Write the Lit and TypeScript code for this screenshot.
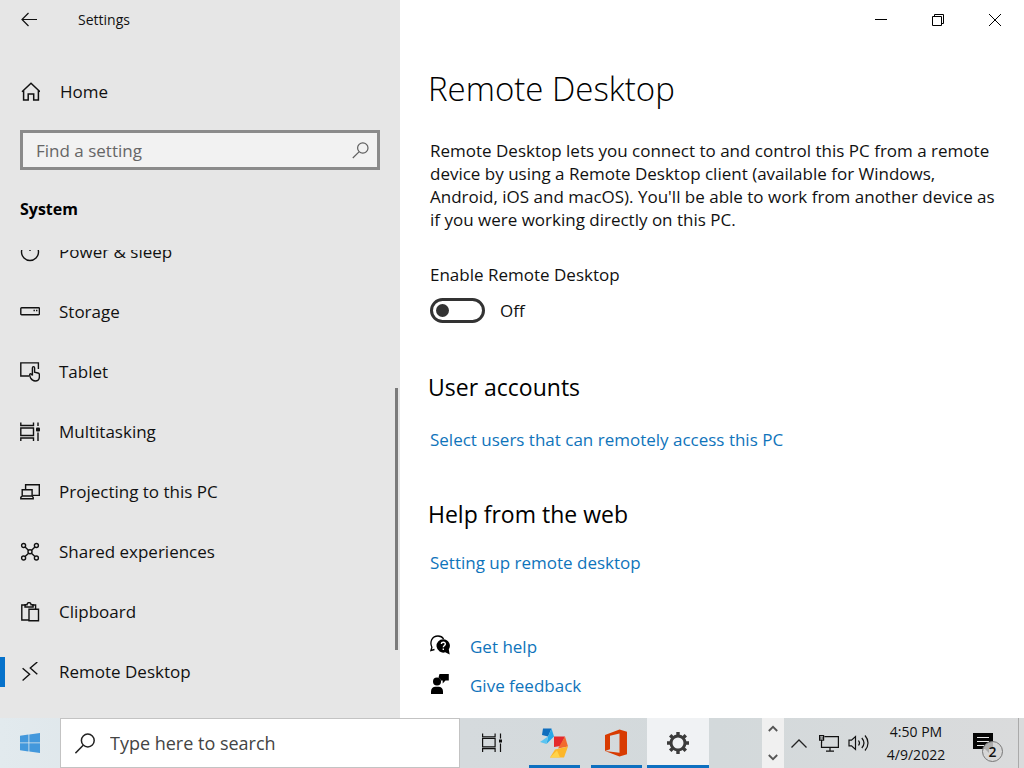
import { LitElement, html, css, svg, nothing } from "lit";
import { customElement, property, state } from "lit/decorators.js";
import { classMap } from "lit/directives/class-map.js";

const navIcons: Record<string, unknown> = {
  power: svg`<circle cx="10" cy="10" r="8.5"/><path d="M10 1v8"/>`,
  storage: svg`<rect x=".8" y="5.700" width="18.600" height="7" rx=".8"/><path d="M13.500 8.500h1.400M16 8.500h1.400" stroke-width="1.400"/>`,
  tablet: svg`<path d="M9 14H.8V.9h17.600v6.200"/><path d="M12.400 12.700V5.900c0-1.700 2.200-1.700 2.200 0v4.400l3.300.7c1 .2 1.500.8 1.500 1.800v2c0 2.500-1.600 4.200-4.200 4.200-2.300 0-3.400-.9-4.500-2.800-.8-1.500-1.200-3-.9-3.900.5-1 1.700-.7 2.600 1.100z"/>`,
  multi: svg`<path d="M.8 .5v3h12.700v-3M.8 19v-3h12.700v3M.8 6h12.700v7.500H.8zM18 .5v3.500M18 10.500v8.500"/><rect x="16" y="5.500" width="4" height="4" rx="1" fill="currentColor" stroke="none"/>`,
  project: svg`<path d="M5.600 7V2.800h13.700v10.600h-7"/><path d="M2.200 14V7.800h9.900V14M.8 16.800h12.400v-1.400L12.100 14H2.200L.8 15.400z"/>`,
  shared: svg`<circle cx="3.600" cy="3.500" r="2"/><circle cx="16.400" cy="3.500" r="2"/><circle cx="3.600" cy="16" r="2"/><circle cx="16.400" cy="16" r="2"/><circle cx="10" cy="9.800" r="2"/><path d="M5.100 5l3.500 3.400M14.900 5l-3.500 3.400M5.100 14.600l3.500-3.400M14.900 14.600l-3.500-3.400"/>`,
  clipboard: svg`<path d="M9 18H1.800V3H6M12 3h3.600v4"/><path d="M5 5V2.800h2c.2-3 3.900-3 4.100 0h2V5z"/><path d="M9 7.300h9.500v11.500H9z"/>`,
  remote: svg`<path d="M2.600 6.200l7 6.100-7 6.200M17.300 0l-7 6 7 6.300"/>`,
};

@customElement("nav-icon")
class NavIcon extends LitElement {
  @property() name = "";
  static styles = css`
    :host { display: block; width: 20px; height: 20px; }
    svg { display: block; fill: none; stroke: currentColor; stroke-width: 1.4; }
  `;
  render() {
    return html`<svg width="20" height="20" viewBox="0 0 20 20" aria-hidden="true">${navIcons[this.name] ?? nothing}</svg>`;
  }
}

@customElement("settings-sidebar")
class SettingsSidebar extends LitElement {
  @state() selected = "remote";
  private items = [
    ["power", "Power & sleep"],
    ["storage", "Storage"],
    ["tablet", "Tablet"],
    ["multi", "Multitasking"],
    ["project", "Projecting to this PC"],
    ["shared", "Shared experiences"],
    ["clipboard", "Clipboard"],
    ["remote", "Remote Desktop"],
  ];
  static styles = css`
    :host { display: flex; flex-direction: column; min-height: 0; background: #e6e6e6; color: #111; }
    button, input { font: inherit; color: inherit; border: 0; background: none; padding: 0; margin: 0; outline: 0; }
    svg { display: block; fill: none; stroke: currentColor; }
    .bar { display: flex; align-items: center; height: 40px; flex: none; font-size: 14px; }
    .back { display: flex; align-items: center; padding: 0 20px; height: 40px; margin-right: 20px; }
    .home { display: flex; align-items: center; gap: 20px; height: 60px; margin-top: 22px; padding: 0 20px; flex: none; }
    .search { display: flex; align-items: center; box-sizing: border-box; height: 40px; flex: none; margin: 8px 20px 0; border: 3px solid #8b8b8b; background: #f2f2f2; padding: 0 8px 0 13px; color: #5f5f5f; }
    .search input { flex: 1; min-width: 0; height: 34px; }
    .search input::placeholder { color: #666; opacity: 1; }
    h2 { margin: 24px 20px 0; font-size: 16px; font-weight: 700; line-height: 30px; height: 56px; flex: none; color: #000; }
    .scroller { position: relative; flex: 1; min-height: 0; overflow: hidden; }
    ul { list-style: none; padding: 0; margin: -28px 0 0; }
    .item { display: flex; align-items: center; gap: 19px; width: 100%; height: 60px; padding-right: 20px; text-align: left; }
    .item::before { content: ""; width: 5px; height: 30px; margin-right: -4px; }
    .item.on::before { background: #0672cb; }
    .thumb { position: absolute; right: 2px; top: 138px; width: 3px; height: 56%; background: #7b7b7b; }
  `;
  render() {
    return html`
      <div class="bar">
        <button class="back" aria-label="Back"><svg width="18" height="16" viewBox="0 0 18 16" stroke-width="1.200"><path d="M17 7.500H2.500M8.500 1L2 7.500 8.500 14"/></svg></button>
        <span>Settings</span>
      </div>
      <button class="home"><svg width="20" height="20" viewBox="0 0 20 20" stroke-width="1.500"><path d="M2 9.700l9-8.500 9 8.500M3.600 8.300V18h4.600v-6h5.500v6h4.700V8.300"/></svg><span>Home</span></button>
      <label class="search"><input type="search" placeholder="Find a setting" aria-label="Find a setting" />
        <svg width="17" height="17" viewBox="0 0 17 17" stroke-width="1.200"><circle cx="10.800" cy="6" r="5.200"/><path d="M7 9.800L.8 16"/></svg></label>
      <h2>System</h2>
      <div class="scroller">
        <ul>
          ${this.items.map(([id, label]) => html`<li><button class=${classMap({ item: true, on: id === this.selected })} @click=${() => (this.selected = id)}><nav-icon name=${id}></nav-icon><span>${label}</span></button></li>`)}
        </ul>
        <div class="thumb"></div>
      </div>`;
  }
}

@customElement("settings-content")
class SettingsContent extends LitElement {
  @state() enabled = false;
  static styles = css`
    :host { display: flex; flex-direction: column; min-height: 0; overflow: hidden; background: #fff; color: #111; }
    .controls { display: flex; justify-content: flex-end; flex: none; padding-right: 1px; }
    .controls button { width: 57px; height: 40px; border: 0; padding: 0; background: none; display: grid; place-items: center; color: #000; }
    svg { display: block; }
    .page { padding: 24px 24px 0 28px; }
    h1 { margin: 0; font-size: 33px; font-weight: 350; line-height: 50px; color: #000; }
    .body { padding-left: 2px; }
    p { margin: 25px 0 0; line-height: 23px; }
    .label { display: block; margin-top: 32px; line-height: 24px; }
    .row { display: flex; align-items: center; gap: 15px; margin-top: 11px; height: 25px; line-height: 25px; }
    .toggle { appearance: none; box-sizing: border-box; width: 55px; height: 25px; margin: 0; border: 3px solid #333; border-radius: 13px; display: flex; align-items: center; padding: 0 3px; }
    .toggle::before { content: ""; width: 13px; height: 13px; border-radius: 50%; background: #333; }
    .toggle:checked { justify-content: flex-end; }
    h2 { margin: 47px 0 0; font-size: 23px; font-weight: 400; line-height: 34px; color: #000; }
    a { color: #0f74bb; text-decoration: none; line-height: 24px; }
    .link { display: block; margin-top: 24px; }
    .web { margin-top: 45px; }
    .web + .link { margin-top: 20px; }
    .support { display: grid; gap: 15px; margin-top: 60px; }
    .support a { display: flex; align-items: center; gap: 20px; }
    .support svg { color: #000; margin-top: -4px; }
  `;
  render() {
    return html`
      <div class="controls">
        <button aria-label="Minimize"><svg width="12" height="12" viewBox="0 0 12 12" stroke="currentColor"><path d="M0 5.500h12"/></svg></button>
        <button aria-label="Restore"><svg width="12" height="12" viewBox="0 0 12 12" fill="none" stroke="currentColor"><path d="M.5 2.500h9v9h-9zM2.500 2.500v-2h9v9h-2"/></svg></button>
        <button aria-label="Close"><svg width="12" height="12" viewBox="0 0 12 12" stroke="currentColor"><path d="M0 0l12 12M12 0L0 12"/></svg></button>
      </div>
      <div class="page">
        <h1>Remote Desktop</h1>
        <div class="body">
          <p>Remote Desktop lets you connect to and control this PC from a remote device by using a Remote Desktop client (available for Windows, Android, iOS and macOS). You'll be able to work from another device as if you were working directly on this PC.</p>
          <label class="label" for="enable">Enable Remote Desktop</label>
          <div class="row"><input id="enable" class="toggle" type="checkbox" role="switch" .checked=${this.enabled} @change=${() => (this.enabled = !this.enabled)} /><span>${this.enabled ? "On" : "Off"}</span></div>
        </div>
        <h2>User accounts</h2>
        <a class="body link" href="#users">Select users that can remotely access this PC</a>
        <h2 class="web">Help from the web</h2>
        <a class="body link" href="#setup">Setting up remote desktop</a>
        <div class="body support">
          <a href="#help"><svg width="20" height="20" viewBox="0 0 20 20"><path d="M4.500 14.500L.9 15.500l1-3.300C-.6 7 2 1 8 1c2.500 0 4.500 1.200 5.600 3" fill="none" stroke="currentColor" stroke-width="1.300"/><path d="M13.300 4.200a6.600 6.600 0 0 1 5.500 10.200l.9 5.100-4.500-2.200A6.700 6.700 0 1 1 13.300 4.200z" fill="currentColor"/><path d="M11.300 9c.2-2.500 4.200-2.300 4 .1-.1 1.400-2 1.500-2 3.200M13.300 13.500v1.500" fill="none" stroke="#fff" stroke-width="1.400"/></svg><span>Get help</span></a>
          <a href="#feedback"><svg width="20" height="20" viewBox="0 0 20 20" fill="currentColor"><path d="M9.500 0h9.300v6.600h-3.300L12.700 9.500V6.600H11A5 5 0 0 0 8.500 3.500z"/><circle cx="7" cy="7.600" r="4"/><path d="M1 20v-2.500c0-3 1.800-4.800 4.500-4.800h3c2.700 0 4.500 1.800 4.500 4.800V20z"/></svg><span>Give feedback</span></a>
        </div>
      </div>`;
  }
}

@customElement("task-bar")
class TaskBar extends LitElement {
  static styles = css`
    :host { display: flex; align-items: stretch; height: 50px; background: linear-gradient(90deg, #e2eaee, #d5dadd 45%, #d3d9db 70%, #dadbdc 100%); color: #111; }
    button, input { font: inherit; color: inherit; border: 0; background: none; padding: 0; margin: 0; outline: 0; }
    button { display: grid; place-items: center; }
    svg { display: block; }
    .start { width: 60px; }
    .search { display: flex; align-items: center; gap: 15px; box-sizing: border-box; width: 400px; padding: 0 14px; border: 1px solid #c3c3c3; background: #fff; }
    .search input { flex: 1; min-width: 0; font-size: 18px; }
    .search input::placeholder { color: #444; opacity: 1; }
    .app { width: 62px; box-sizing: border-box; }
    .apps { display: flex; flex: 1; padding-left: 1px; }
    .open { background: linear-gradient(#0e70c0, #0e70c0) center bottom / 51px 3px no-repeat; }
    .active { background: linear-gradient(#0e70c0, #0e70c0) center bottom / 100% 3px no-repeat #f0f2f4; }
    .pager { display: flex; flex-direction: column; justify-content: space-between; width: 22px; background: #f0f0f0; padding: 7px 0; box-sizing: border-box; color: #555; }
    .pager button { width: 100%; }
    .tray { display: flex; align-items: center; }
    .tray button { width: 30px; height: 50px; }
    .clock { width: 84px; text-align: center; font-size: 14px; line-height: 23px; }
    .tray .notes { width: 60px; position: relative; padding: 0 10px 0 0; }
    .badge { position: absolute; left: 24px; top: 23px; width: 19px; height: 19px; border: 1px solid #777; border-radius: 50%; background: #d6d6d6cc; font-size: 14px; font-weight: 600; line-height: 19px; text-align: center; }
    .tray .desk { width: 6px; border-left: 1px solid #aaa; }
  `;
  render() {
    return html`
      <button class="start" aria-label="Start"><svg width="20" height="20" viewBox="0 0 20 20" fill="#4398dc"><path d="M0 2.800l8.500-1.200v7.900H0zM9.300 1.500L20 0v9.500H9.300zM0 10.300h8.500v8.100L0 17.200zM9.300 10.300H20V20L9.300 18.500z"/></svg></button>
      <label class="search"><svg width="20" height="21" viewBox="0 0 20 21" fill="none" stroke="#222" stroke-width="1.500"><circle cx="12.800" cy="7.500" r="6.400"/><path d="M8.200 12.200L.4 20.200"/></svg><input type="search" placeholder="Type here to search" aria-label="Type here to search" /></label>
      <div class="apps">
        <button class="app" aria-label="Task View"><svg width="20" height="20" viewBox="0 0 20 20" fill="none" stroke="#111" stroke-width="1.200"><path d="M.6 .5v3.400h12.500V.5M.6 19v-3.400h12.500V19M.6 5.500h12.500v8.400H.6zM18.500.5v5M18.500 10.500V19"/><path d="M17 6.500h3v3h-3z" fill="#111" stroke="none"/></svg></button>
        <button class="app open" aria-label="Remote tool"><svg width="28" height="30" viewBox="0 0 28 30"><path d="M3 .5h8.500L8 8.500 2 7z" fill="#0f6dbd"/><path d="M11.500.5L14 8.500 6.500 16 8 8.500z" fill="#28a8e8"/><path d="M0 14l8-5.500L6.500 16z" fill="#5bc4f1"/><path d="M14 8.500h11L20.500 18 14 19z" fill="#e52a2c"/><path d="M25 8.500l3 10-10 2z" fill="#f26a2e"/><path d="M28 18.500L24 29.500H10l5-8z" fill="#fcb62a"/><path d="M10 29.500l7-7 3 7z" fill="#ffd34a"/></svg></button>
        <button class="app open" aria-label="Office"><svg width="24" height="28" viewBox="0 0 24 28" fill="#d83b01"><path fill-rule="evenodd" d="M1 6L15.500.5 23 2.700v22.600L15.500 27.500 1 22l14.500 1.700V4.500L6 6.800v13.500L1 22z"/></svg></button>
        <button class="app active" aria-label="Settings"><svg width="24" height="24" viewBox="0 0 24 24" fill="none" stroke="#3b3b3b"><circle cx="12" cy="12" r="7" stroke-width="3"/><path d="M12 1v4M12 19v4M1 12h4M19 12h4M4.200 4.200L7 7M17 17l2.800 2.800M4.200 19.800L7 17M17 7l2.800-2.800" stroke-width="3.400"/></svg></button>
      </div>
      <div class="pager">
        <button aria-label="Scroll up"><svg width="10" height="7" viewBox="0 0 10 7" fill="none" stroke="currentColor" stroke-width="1.800"><path d="M.8 6L5 1.800 9.200 6"/></svg></button>
        <button aria-label="Scroll down"><svg width="10" height="7" viewBox="0 0 10 7" fill="none" stroke="currentColor" stroke-width="1.800"><path d="M.8 1L5 5.200 9.200 1"/></svg></button>
      </div>
      <div class="tray">
        <button aria-label="Show hidden icons"><svg width="16" height="9" viewBox="0 0 16 9" fill="none" stroke="#222" stroke-width="1.300"><path d="M.5 8.500L8 1l7.500 7.500"/></svg></button>
        <button aria-label="Network"><svg width="20" height="17" viewBox="0 0 20 17" fill="none" stroke="#111" stroke-width="1.200"><path d="M5.500 1.600h13.900v10.800H2.500V7M7 16.200h8M11 12.400v3.800M.6.6h4v4.600h-4zM2.600 5v3M1.900 2.400v1M3.500 2.400v1"/></svg></button>
        <button aria-label="Volume"><svg width="22" height="18" viewBox="0 0 22 18" fill="none" stroke="#111" stroke-width="1.200"><path d="M1 6.200h2.500L7.500 2.500v13L3.500 11.800H1zM10.500 6.500c1.200 1.500 1.200 3.500 0 5M13.800 4c2.600 3 2.600 7 0 10M17 1.500c4 4.500 4 10.500 0 15"/></svg></button>
        <div class="clock"><div>4:50 PM</div><div>4/9/2022</div></div>
        <button class="notes" aria-label="Notifications, 2 new"><svg width="20" height="20" viewBox="0 0 20 20"><path d="M0 0h20v16h-4v4l-4-4H0z" fill="#050505"/><path d="M4 4.500h12M4 8.500h12M4 12.500h7" stroke="#e8e8e8" stroke-width="1.200"/></svg><span class="badge">2</span></button>
        <button class="desk" aria-label="Show desktop"></button>
      </div>`;
  }
}

@customElement("app-root")
class AppRoot extends LitElement {
  static styles = css`
    :host { display: flex; flex-direction: column; height: 100vh; overflow: hidden; font-family: "Open Sans", "Noto Sans", sans-serif; font-size: 17px; line-height: 24px; }
    .window { display: flex; flex: 1; min-height: 0; }
    settings-sidebar { flex: 0 0 400px; }
    settings-content { flex: 1; min-width: 0; }
    task-bar { flex: none; }
  `;
  render() {
    return html`<div class="window"><settings-sidebar></settings-sidebar><settings-content></settings-content></div><task-bar></task-bar>`;
  }
}
